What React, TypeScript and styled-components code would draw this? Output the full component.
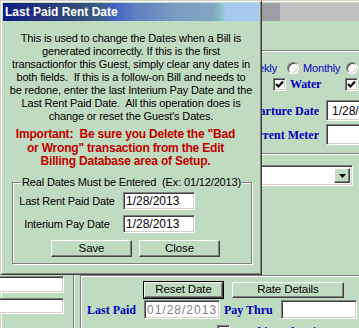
import React from "react";
import styled, { createGlobalStyle, css } from "styled-components";

const FACE = "#c0dcc0";
const BLUE = "#0000c0";
const UI = `"Liberation Sans", Arial, sans-serif`;
const SERIF = `"Liberation Serif", "Times New Roman", serif`;

const GlobalStyle = createGlobalStyle`
  html, body { margin: 0; padding: 0; background: ${FACE}; }
  body { overflow: hidden; font-family: ${UI}; font-size: 11px; color: #000; }
  *, *::before, *::after { box-sizing: border-box; }
`;

const sunken = css`
  border: 1px solid;
  border-color: #808080 #ffffff #ffffff #808080;
  box-shadow: inset 1px 1px 0 #404040, inset -1px -1px 0 #d4d0c8;
  background: #fff;
`;

const raised = css`
  border: 1px solid;
  border-color: #ffffff #404040 #404040 #ffffff;
  box-shadow: inset -1px -1px 0 #808080;
  background: ${FACE};
`;

const Stage = styled.div`
  position: relative;
  width: 359px;
  height: 328px;
  overflow: hidden;
  background: ${FACE};
`;

/* ---------- main window behind the dialog ---------- */
const MainWindow = styled.div`
  width: 560px;
  height: 420px;
  border: 1px solid;
  border-color: #d4d0c8 #404040 #404040 #d4d0c8;
  box-shadow: inset 1px 1px 0 #fff;
  padding: 2px 2px 0 2px;
  display: flex;
  flex-direction: column;
`;

const MainTitle = styled.div`
  height: 18px;
  flex: none;
  background: linear-gradient(
    to right,
    #808080 0,
    #9e9da3 259px,
    #9e9da3 277px,
    #c0c0c0 277px,
    #c0c0c0 100%
  );
`;

const TopFrame = styled.div`
  margin-top: 29px;
  border-top: 1px solid #808080;
  box-shadow: inset 0 1px 0 #fff;
  padding-top: 1px;
`;

const RightColumn = styled.div`
  margin-left: 229px;
  display: flex;
  flex-direction: column;
`;

const OptionRow = styled.div`
  display: flex;
  align-items: center;
  height: 14px;
  margin-top: ${(p: { $top: number; $indent?: number }) => p.$top}px;
  padding-left: ${(p) => p.$indent ?? 0}px;
  color: ${BLUE};
  letter-spacing: -0.15px;
`;

const OptionText = styled.span<{ $width?: number; $gap?: number }>`
  flex: none;
  width: ${(p) => (p.$width ? `${p.$width}px` : "auto")};
  margin-left: ${(p) => p.$gap ?? 0}px;
  text-align: ${(p) => (p.$width ? "right" : "left")};
  white-space: nowrap;
  line-height: 14px;
`;

const Radio = styled.span<{ $gap: number }>`
  flex: none;
  width: 12px;
  height: 12px;
  margin-left: ${(p) => p.$gap}px;
  border-radius: 50%;
  background: #fff;
  border: 1px solid;
  border-color: #808080 #ffffff #ffffff #808080;
  box-shadow: inset 1px 1px 0 #404040, inset -1px -1px 0 #d4d0c8;
`;

const CheckBox = styled.span<{ $gap?: number }>`
  flex: none;
  width: 13px;
  height: 13px;
  margin-left: ${(p) => p.$gap ?? 0}px;
  ${sunken};
  display: flex;
  align-items: center;
  justify-content: center;
`;

const SerifLabel = styled.span<{ $width?: number; $gap?: number; $pad?: number }>`
  flex: none;
  font-family: ${SERIF};
  font-weight: bold;
  font-size: 12px;
  color: ${BLUE};
  white-space: nowrap;
  width: ${(p) => (p.$width ? `${p.$width}px` : "auto")};
  margin-left: ${(p) => p.$gap ?? 0}px;
  padding-left: ${(p) => p.$pad ?? 0}px;
  line-height: 14px;
`;

const FieldGrid = styled.div`
  display: grid;
  grid-template-columns: 87px 120px;
  column-gap: 7px;
  row-gap: 3px;
  margin-top: 9px;
  align-items: center;
`;

const RightLabel = styled(SerifLabel)`
  justify-self: end;
`;

const TextBox = styled.input<{ $h: number; $w?: number; $pad?: number }>`
  ${sunken};
  display: block;
  height: ${(p) => p.$h}px;
  width: ${(p) => (p.$w ? `${p.$w}px` : "100%")};
  margin: 0;
  padding: 0 0 0 ${(p) => p.$pad ?? 5}px;
  font-family: ${UI};
  font-size: 12px;
  color: #000;
  outline: none;
  &:disabled {
    color: #808080;
    letter-spacing: 1px;
    padding-left: 2px;
  }
`;

const Separator = styled.div`
  margin-top: 8px;
  height: 2px;
  border-top: 1px solid #808080;
  box-shadow: inset 0 1px 0 #fff;
  margin-right: -300px;
`;

const Combo = styled.div`
  margin-top: 10px;
  width: 121px;
  height: 21px;
  ${sunken};
  display: flex;
  justify-content: flex-end;
  padding: 2px;
`;

const DropButton = styled.span`
  width: 16px;
  height: 100%;
  ${raised};
  display: flex;
  align-items: center;
  justify-content: center;
`;

const BottomRow = styled.div`
  margin-top: 89px;
  display: flex;
  height: 70px;
`;

const LeftGroup = styled.div`
  width: 71px;
  flex: none;
  border-right: 1px solid #808080;
  box-shadow: 1px 0 0 #fff;
  padding-top: 1px;
  display: flex;
  flex-direction: column;
  gap: 5px;
`;

const SideBox = styled.div<{ $h: number }>`
  ${sunken};
  width: 67px;
  height: ${(p) => p.$h}px;
  margin-left: -6px;
`;

const Panel = styled.div`
  flex: 1;
  margin-left: 6px;
  border-left: 1px solid #808080;
  border-top: 1px solid #808080;
  box-shadow: inset 1px 1px 0 #fff;
  padding-top: 6px;
  display: flex;
  flex-direction: column;
`;

const ButtonRow = styled.div`
  display: flex;
  gap: 9px;
  padding-left: 63px;
`;

const WinButton = styled.button<{ $w: number; $h: number; $default?: boolean }>`
  width: ${(p) => p.$w}px;
  height: ${(p) => p.$h}px;
  margin: 0;
  padding: 0;
  font-family: ${UI};
  font-size: 11.5px;
  letter-spacing: -0.1px;
  color: #000;
  line-height: 1;
  ${raised};
  ${(p) =>
    p.$default &&
    css`
      outline: 1px solid #000;
      outline-offset: 0;
    `}
`;

const PanelGrid = styled.div`
  display: grid;
  grid-template-columns: 63px 76px 61px 76px;
  align-items: center;
  margin-top: 2px;
  height: 19px;
`;

const BottomChecks = styled.div`
  display: flex;
  align-items: flex-start;
  margin-top: 6px;
  padding-left: 136px;
`;

/* ---------- dialog ---------- */
const Dialog = styled.div`
  position: absolute;
  left: 0;
  top: 0;
  z-index: 2;
  width: 262px;
  height: 275px;
  background: ${FACE};
  border: 1px solid;
  border-color: #d4d0c8 #404040 #404040 #d4d0c8;
  box-shadow: inset 1px 1px 0 #fff, inset -1px -1px 0 #808080;
  padding: 2px;
  display: flex;
  flex-direction: column;
`;

const TitleBar = styled.div`
  height: 18px;
  flex: none;
  padding-left: 2px;
  color: #fff;
  font-weight: bold;
  font-size: 12px;
  line-height: 18px;
  background: linear-gradient(
    to right,
    #0a1e80 0%,
    #22307e 12%,
    #2e4676 26%,
    #3c5e86 38%,
    #4563c4 44%,
    #6080c0 52%,
    #7c9cc2 68%,
    #82a6c4 82%,
    #86c0c0 85%,
    #a6caf0 87%,
    #a6caf0 100%
  );
`;

const Message = styled.div`
  margin-top: 11px;
  text-align: center;
  line-height: 13px;
  letter-spacing: -0.15px;
`;

const Warning = styled.div`
  margin-top: 5px;
  margin-right: 11px;
  text-align: center;
  color: #c00000;
  font-weight: bold;
  font-size: 12px;
  line-height: 13.5px;
  letter-spacing: -0.2px;
`;

const Line = styled.span`
  display: block;
  white-space: pre;
`;

const GroupBox = styled.div`
  position: relative;
  margin: 13.5px 0 0 9px;
  width: 240px;
  height: 82px;
  border: 1px solid #808080;
  box-shadow: inset 1px 1px 0 #fff, 1px 1px 0 #fff;
  padding-top: 9px;
`;

const Legend = styled.span`
  position: absolute;
  top: -7px;
  left: 8px;
  padding: 0 1px;
  background: ${FACE};
  line-height: 13px;
  letter-spacing: -0.15px;
  white-space: pre;
`;

const GroupRow = styled.div<{ $top?: number }>`
  display: grid;
  grid-template-columns: 108px 72px;
  column-gap: 2px;
  align-items: center;
  margin-top: ${(p) => p.$top ?? 0}px;
`;

const CenterLabel = styled.span`
  text-align: center;
  letter-spacing: -0.15px;
  white-space: nowrap;
`;

const DialogButtons = styled.div`
  display: flex;
  gap: 7px;
  margin-top: 7px;
  padding-left: 38px;
`;

const Check = () => (
  <svg width="9" height="9" viewBox="0 0 9 9">
    <path d="M1 4 L3.5 6.5 L8 1.5" stroke="#000" strokeWidth="2" fill="none" />
  </svg>
);

const Arrow = () => (
  <svg width="7" height="4" viewBox="0 0 7 4">
    <path d="M0 0 H7 L3.5 4 Z" fill="#000" />
  </svg>
);

export default function App() {
  return (
    <>
      <GlobalStyle />
      <Stage>
        <MainWindow>
          <MainTitle />
          <TopFrame>
            <RightColumn>
              <OptionRow $top={9}>
                <OptionText $width={45}>Weekly</OptionText>
                <Radio $gap={10} />
                <OptionText $gap={4}>Monthly</OptionText>
                <Radio $gap={6} />
              </OptionRow>
              <OptionRow $top={2} $indent={41}>
                <CheckBox>
                  <Check />
                </CheckBox>
                <SerifLabel $gap={4} $width={55}>
                  Water
                </SerifLabel>
                <CheckBox>
                  <Check />
                </CheckBox>
              </OptionRow>
              <FieldGrid>
                <RightLabel>Departure Date</RightLabel>
                <TextBox $h={21} readOnly defaultValue="1/28/2013" />
                <RightLabel>Current Meter</RightLabel>
                <TextBox $h={21} readOnly defaultValue="" />
              </FieldGrid>
              <Separator />
              <Combo>
                <DropButton>
                  <Arrow />
                </DropButton>
              </Combo>
            </RightColumn>
          </TopFrame>
          <BottomRow>
            <LeftGroup>
              <SideBox $h={17} />
              <SideBox $h={16} />
            </LeftGroup>
            <Panel>
              <ButtonRow>
                <WinButton $w={79} $h={16} $default>
                  Reset Date
                </WinButton>
                <WinButton $w={112} $h={16}>
                  Rate Details
                </WinButton>
              </ButtonRow>
              <PanelGrid>
                <SerifLabel $pad={6}>Last Paid</SerifLabel>
                <TextBox $h={19} disabled defaultValue="01/28/2013" />
                <SerifLabel $pad={4}>Pay Thru</SerifLabel>
                <TextBox $h={19} readOnly defaultValue="" />
              </PanelGrid>
              <BottomChecks>
                <CheckBox />
                <SerifLabel $gap={3}>Combine Cleaning Fees</SerifLabel>
              </BottomChecks>
            </Panel>
          </BottomRow>
        </MainWindow>

        <Dialog>
          <TitleBar>Last Paid Rent Date</TitleBar>
          <Message>
            <Line>This is used to change the Dates when a Bill is</Line>
            <Line>generated incorrectly. If this is the first</Line>
            <Line>transactionfor this Guest, simply clear any dates in</Line>
            <Line>both fields.  If this is a follow-on Bill and needs to</Line>
            <Line>be redone, enter the last Interium Pay Date and the</Line>
            <Line>Last Rent Paid Date.  All this operation does is</Line>
            <Line>change or reset the Guest's Dates.</Line>
          </Message>
          <Warning>
            <Line>Important:  Be sure you Delete the "Bad</Line>
            <Line>or Wrong" transaction from the Edit</Line>
            <Line>Billing Database area of Setup.</Line>
          </Warning>
          <GroupBox>
            <Legend>Real Dates Must be Entered  (Ex: 01/12/2013)</Legend>
            <GroupRow>
              <CenterLabel>Last Rent Paid Date</CenterLabel>
              <TextBox $h={18} $pad={2} readOnly defaultValue="1/28/2013" />
            </GroupRow>
            <GroupRow $top={5}>
              <CenterLabel>Interium Pay Date</CenterLabel>
              <TextBox $h={18} $pad={2} readOnly defaultValue="1/28/2013" />
            </GroupRow>
            <DialogButtons>
              <WinButton $w={81} $h={17}>
                Save
              </WinButton>
              <WinButton $w={81} $h={17}>
                Close
              </WinButton>
            </DialogButtons>
          </GroupBox>
        </Dialog>
      </Stage>
    </>
  );
}
